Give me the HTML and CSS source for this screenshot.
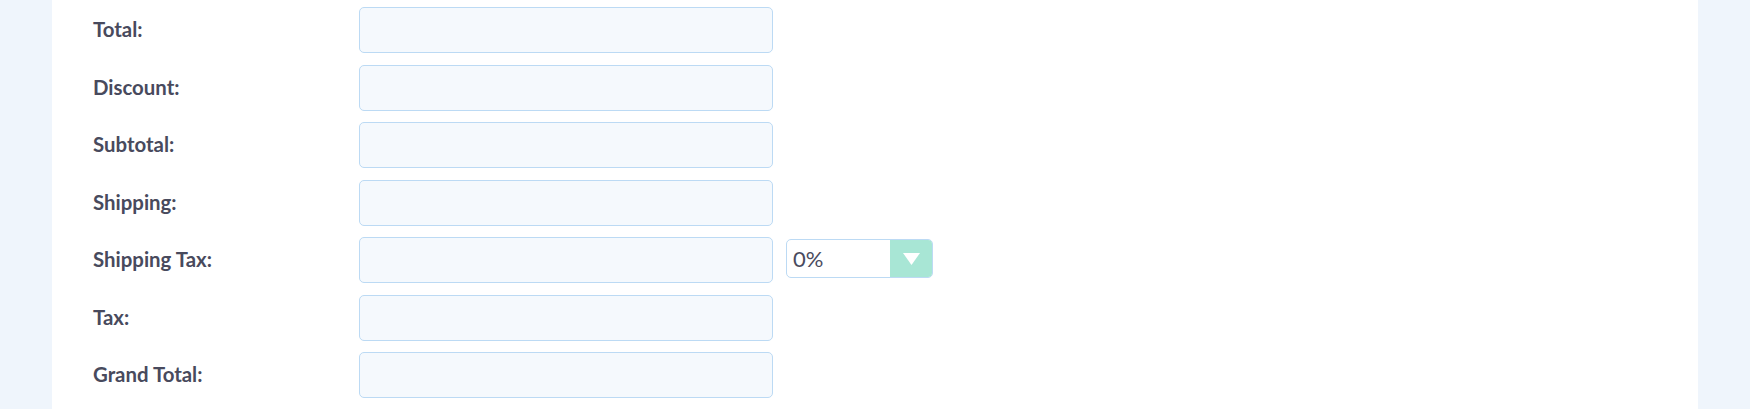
FILE: index.html
```html
<!DOCTYPE html>
<html>
<head>
<meta charset="utf-8">
<link rel="stylesheet" href="styles.css">
</head>
<body>
<div class="page">
  <div class="panel">
    <form class="totals">
      <div class="row">
        <label class="label">Total:</label>
        <input class="field" type="text">
      </div>
      <div class="row">
        <label class="label">Discount:</label>
        <input class="field" type="text">
      </div>
      <div class="row">
        <label class="label">Subtotal:</label>
        <input class="field" type="text">
      </div>
      <div class="row">
        <label class="label">Shipping:</label>
        <input class="field" type="text">
      </div>
      <div class="row">
        <label class="label">Shipping Tax:</label>
        <input class="field" type="text">
        <div class="select">
          <span class="select-value">0%</span>
          <span class="select-btn">
            <svg width="17" height="12" viewBox="0 0 17 12"><path d="M0 0 L17 0 L8.5 12 Z" fill="#ffffff"/></svg>
          </span>
        </div>
      </div>
      <div class="row">
        <label class="label">Tax:</label>
        <input class="field" type="text">
      </div>
      <div class="row">
        <label class="label">Grand Total:</label>
        <input class="field" type="text">
      </div>
    </form>
  </div>
</div>
</body>
</html>
```

FILE: styles.css
```css
html, body {
  margin: 0;
  padding: 0;
}
body {
  background: #eff5fc;
  font-family: "Lato", "Liberation Sans", sans-serif;
  width: 1750px;
  height: 409px;
  overflow: hidden;
}
.page {
  display: flex;
  padding-left: 52px;
  height: 409px;
}
.panel {
  width: 1646px;
  height: 409px;
  background: #ffffff;
  box-sizing: border-box;
  padding: 7px 0 0 41px;
}
.totals {
  display: flex;
  flex-direction: column;
  gap: 11.5px;
}
.row {
  display: flex;
  align-items: center;
  height: 46px;
}
.label {
  width: 266px;
  flex: none;
  padding-bottom: 2px;
  font-size: 20.4px;
  font-weight: 700;
  color: #484a5d;
}
.field {
  width: 414px;
  height: 46px;
  box-sizing: border-box;
  border: 1.5px solid #bcdaf4;
  border-radius: 5px;
  background: #f5f9fd;
  margin: 0;
  padding: 0 12px;
  outline: none;
}
.select {
  align-self: flex-start;
  margin: 2px 0 0 13px;
  width: 147px;
  height: 39px;
  box-sizing: border-box;
  border: 1.5px solid #bcdaf4;
  border-radius: 5px;
  background: #ffffff;
  display: flex;
  align-items: stretch;
  overflow: hidden;
}
.select-value {
  flex: 1;
  display: flex;
  align-items: center;
  padding-left: 6px;
  font-size: 22px;
  color: #4a4b5e;
}
.select-btn {
  width: 42px;
  background: #a8e6d5;
  display: flex;
  align-items: center;
  justify-content: center;
}
```
